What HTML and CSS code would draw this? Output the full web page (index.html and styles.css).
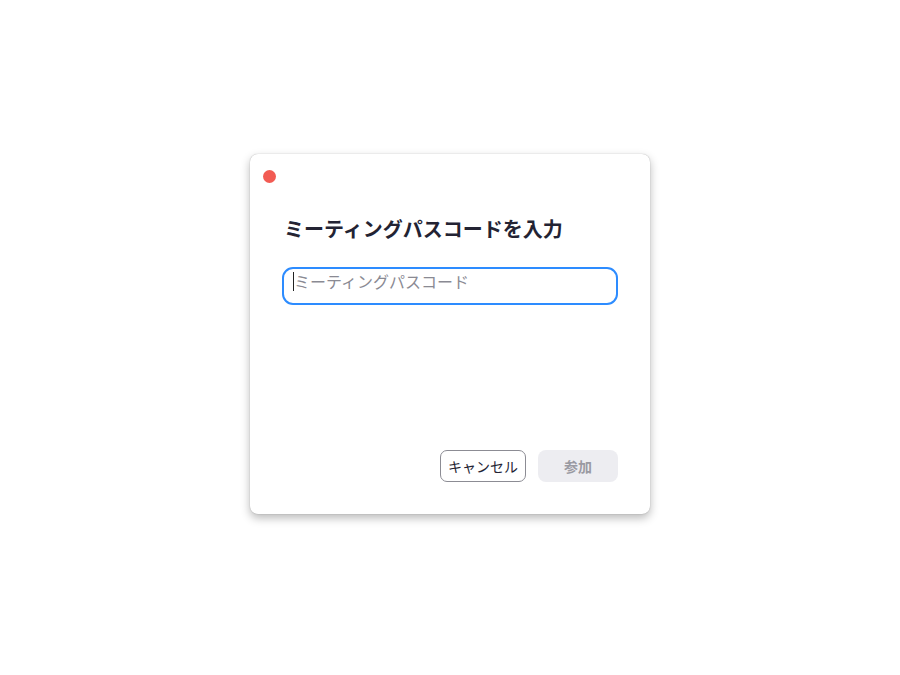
FILE: index.html
```html
<!DOCTYPE html>
<html lang="ja">

<head>
    <meta charset="UTF-8">
    <meta name="viewport" content="width=device-width, initial-scale=1.0">
    <title>ミーティングパスコードを入力</title>
    <link rel="stylesheet" href="styles.css">
</head>

<body>
    <div class="dialog">
        <div class="titlebar">
            <span class="close-dot"></span>
        </div>
        <div class="content">
            <h1 class="title">ミーティングパスコードを入力</h1>
            <div class="field">
                <span class="caret"></span>
                <input type="text" class="passcode" placeholder="ミーティングパスコード">
            </div>
        </div>
        <div class="actions">
            <button class="btn btn-cancel">キャンセル</button>
            <button class="btn btn-join" disabled>参加</button>
        </div>
    </div>
</body>

</html>
```

FILE: styles.css
```css
body {
    margin: 0;
    background-color: #fff;
    font-family: "Noto Sans CJK JP", "Noto Sans", sans-serif;
    height: 675px;
    display: flex;
    justify-content: center;
    align-items: flex-start;
}

.dialog {
    margin-top: 154px;
    width: 400px;
    height: 360px;
    background-color: #fff;
    border-radius: 8px;
    box-shadow: 0 0 1px rgba(0, 0, 0, 0.35), 0 4px 10px rgba(0, 0, 0, 0.28);
    display: flex;
    flex-direction: column;
    box-sizing: border-box;
}

.titlebar {
    height: 44px;
    padding: 16px 0 0 13px;
    box-sizing: border-box;
}

.close-dot {
    display: block;
    width: 13px;
    height: 13px;
    border-radius: 50%;
    background-color: #f25b53;
}

.content {
    padding: 0 32px;
    flex: 1;
}

.title {
    margin: 17px 0 0 2px;
    font-size: 20px;
    line-height: 28px;
    font-weight: bold;
    color: #232333;
}

.field {
    position: relative;
    margin-top: 24px;
}

.passcode {
    display: block;
    width: 100%;
    height: 38px;
    box-sizing: border-box;
    border: 2px solid #2d8cff;
    border-radius: 11px;
    padding: 0 10px 10px 10px;
    font-family: inherit;
    font-size: 16px;
    color: #232333;
    outline: none;
}

.passcode::placeholder {
    color: #8a8a93;
}

.caret {
    position: absolute;
    left: 11px;
    top: 5px;
    width: 1px;
    height: 19px;
    background-color: #222;
}

.actions {
    display: flex;
    justify-content: flex-end;
    gap: 12px;
    padding: 0 32px 32px 0;
}

.btn {
    height: 32px;
    font-family: inherit;
    font-size: 14px;
    border-radius: 7px;
    cursor: pointer;
}

.btn-cancel {
    width: 86px;
    background-color: #fff;
    border: 1px solid #8c8c94;
    color: #232333;
    padding: 0;
}

.btn-join {
    width: 80px;
    background-color: #ededf1;
    border: none;
    color: #9a9aa2;
    font-weight: bold;
    border-radius: 8px;
}
```
